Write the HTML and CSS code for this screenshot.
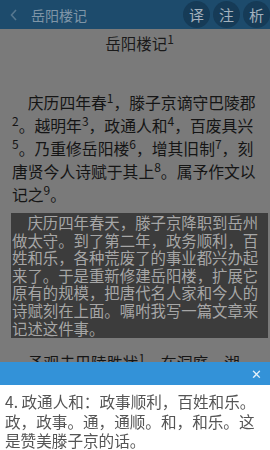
FILE: index.html
```html
<!DOCTYPE html>
<html lang="zh-CN">
<head>
    <meta charset="UTF-8">
    <meta name="viewport" content="width=device-width, initial-scale=1.0">
    <title>岳阳楼记</title>
    <link rel="stylesheet" href="styles.css">
</head>
<body>
    <!-- 顶部栏 -->
    <header class="topbar">
        <div class="topbar-left">
            <svg class="back" width="10" height="14" viewBox="0 0 10 14">
                <path d="M7 2 L2.5 7 L7 12" fill="none" stroke="#56778f" stroke-width="1.6"/>
            </svg>
            <span class="topbar-title">岳阳楼记</span>
        </div>
        <div class="topbar-btns">
            <span class="round-btn">译</span>
            <span class="round-btn">注</span>
            <span class="round-btn">析</span>
        </div>
    </header>

    <!-- 正文 -->
    <main class="article">
        <h1 class="article-title">岳阳楼记<sup>1</sup></h1>
        <p class="origin">庆历四年春<sup>1</sup>，滕子京谪守巴陵郡<sup>2</sup>。越明年<sup>3</sup>，政通人和<sup>4</sup>，百废具兴<sup>5</sup>。乃重修岳阳楼<sup>6</sup>，增其旧制<sup>7</sup>，刻唐贤今人诗赋于其上<sup>8</sup>。属予作文以记之<sup>9</sup>。</p>
        <p class="trans">庆历四年春天，滕子京降职到岳州做太守。到了第二年，政务顺利，百姓和乐，各种荒废了的事业都兴办起来了。于是重新修建岳阳楼，扩展它原有的规模，把唐代名人家和今人的诗赋刻在上面。嘱咐我写一篇文章来记述这件事。</p>
        <p class="origin next">予观夫巴陵胜状<sup>1</sup>，在洞庭一湖。</p>
    </main>

    <!-- 注释弹层 -->
    <div class="note-pop">
        <div class="note-bar"><span class="note-close">✕</span></div>
        <div class="note-text">4. 政通人和：政事顺利，百姓和乐。政，政事。通，通顺。和，和乐。这是赞美滕子京的话。</div>
    </div>
</body>
</html>
```

FILE: styles.css
```css
/* 全局 */
body {
    margin: 0;
    background-color: #7a7a7a;
    font-family: "Noto Sans CJK SC", "Noto Sans", sans-serif;
    color: #151515;
    height: 450px;
    overflow: hidden;
}

/* 顶部栏 */
.topbar {
    height: 29px;
    background-color: #1d4b6c;
    display: flex;
    align-items: center;
    justify-content: space-between;
}

.topbar-left {
    display: flex;
    align-items: center;
    padding-left: 9px;
}

.back {
    margin-right: 12px;
}

.topbar-title {
    font-size: 14px;
    color: #7f95a7;
}

.topbar-btns {
    display: flex;
    gap: 3px;
}

.round-btn {
    width: 27px;
    height: 27px;
    border-radius: 50%;
    background-color: #163b57;
    color: #a3b1bd;
    font-size: 15px;
    display: flex;
    align-items: center;
    justify-content: center;
}

/* 正文 */
.article {
    padding: 0 2px 0 11px;
}

.article-title {
    margin: 0;
    font-size: 15.5px;
    font-weight: normal;
    line-height: 28px;
    text-align: center;
    color: #1a1a1a;
}

sup {
    font-size: 12px;
    line-height: 0;
    vertical-align: 6px;
}

.origin {
    margin: 34px 0 0;
    padding-left: 1px;
    font-size: 15.8px;
    line-height: 23px;
    text-indent: 1em;
}

.origin.next {
    margin-top: 13px;
}

.trans {
    margin: 7px 0 0;
    padding: 1px 0 1px 1px;
    background-color: #3c3c3c;
    color: #a6a6a6;
    font-size: 15.4px;
    line-height: 17.6px;
    text-indent: 1em;
}

/* 注释弹层 */
.note-pop {
    position: fixed;
    left: 0;
    right: 0;
    bottom: 0;
}

.note-bar {
    height: 23px;
    background-color: #3392d8;
    display: flex;
    align-items: center;
    justify-content: flex-end;
    padding-right: 8px;
}

.note-close {
    color: #e6f1fa;
    font-size: 13px;
}

.note-text {
    height: 65px;
    box-sizing: border-box;
    background-color: #fff;
    padding: 7px 10px 0 5px;
    font-size: 15.6px;
    line-height: 19.5px;
    color: #555;
}
```
